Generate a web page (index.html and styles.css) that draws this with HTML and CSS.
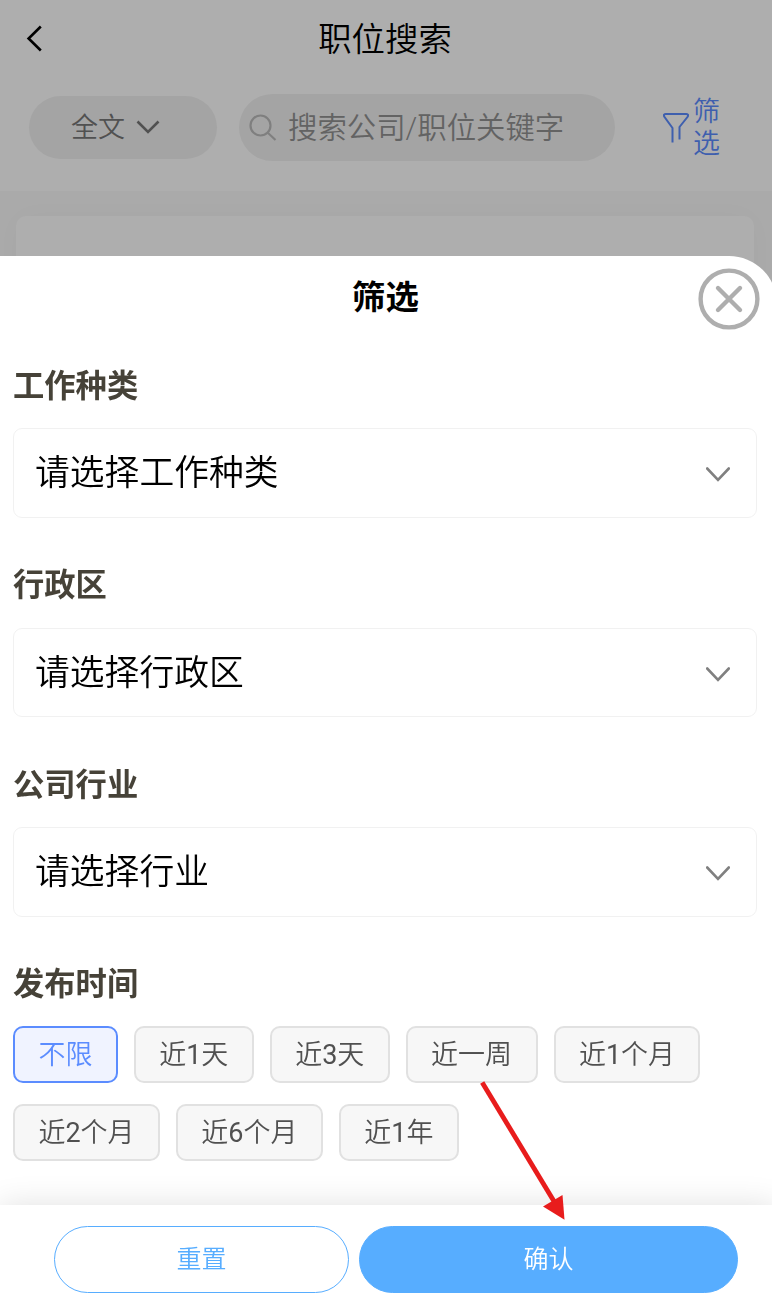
FILE: index.html
```html
<!DOCTYPE html>
<html lang="zh-CN">
<head>
  <meta charset="UTF-8" />
  <title>职位搜索</title>
  <meta name="viewport" content="width=device-width, initial-scale=1.0" />
  <link rel="stylesheet" href="styles.css">
</head>
<body>

<div class="page">
  <header class="top">
    <div class="nav">
      <svg class="back" viewBox="0 0 18 28"><path d="M15.8 1.5 L3.6 13.5 L15.8 25.5" /></svg>
      <h1>职位搜索</h1>
    </div>
    <div class="search-row">
      <div class="scope">
        <span>全文</span>
        <svg class="scope-arrow" viewBox="0 0 24 14"><path d="M1.5 1.5 L12 12 L22.5 1.5" /></svg>
      </div>
      <div class="search">
        <svg class="search-icon" viewBox="0 0 28 28"><circle cx="11.5" cy="11.5" r="10" /><path d="M18.5 18.5 L26.5 26" /></svg>
        <span>搜索公司/职位关键字</span>
      </div>
      <div class="filter">
        <svg class="filter-icon" viewBox="0 0 26 30"><path d="M9.5 29.5 V15 L1.2 3.5 Q0.2 1 3 1 H23 Q25.8 1 24.8 3.5 L16.5 14 V26.5" /></svg>
        <span>筛选</span>
      </div>
    </div>
  </header>
  <div class="result-card"></div>
</div>

<div class="mask"></div>

<div class="sheet">
  <div class="sheet-title">
    <h2>筛选</h2>
    <svg class="close" viewBox="0 0 62 62"><circle cx="31" cy="31" r="28.4" /><path d="M20 20 L42 42 M42 20 L20 42" /></svg>
  </div>

  <div class="sheet-body">
    <section>
      <h3>工作种类</h3>
      <div class="select">
        <span>请选择工作种类</span>
        <svg class="arrow" viewBox="0 0 24 15"><path d="M1.2 1.5 L12 12.8 L22.8 1.5" /></svg>
      </div>
    </section>
    <section>
      <h3>行政区</h3>
      <div class="select">
        <span>请选择行政区</span>
        <svg class="arrow" viewBox="0 0 24 15"><path d="M1.2 1.5 L12 12.8 L22.8 1.5" /></svg>
      </div>
    </section>
    <section>
      <h3>公司行业</h3>
      <div class="select">
        <span>请选择行业</span>
        <svg class="arrow" viewBox="0 0 24 15"><path d="M1.2 1.5 L12 12.8 L22.8 1.5" /></svg>
      </div>
    </section>
    <section>
      <h3>发布时间</h3>
      <div class="chips">
        <span class="chip active">不限</span>
        <span class="chip">近<b>1</b>天</span>
        <span class="chip">近<b>3</b>天</span>
        <span class="chip">近一周</span>
        <span class="chip">近<b>1</b>个月</span>
        <span class="chip">近<b>2</b>个月</span>
        <span class="chip">近<b>6</b>个月</span>
        <span class="chip">近<b>1</b>年</span>
      </div>
    </section>
  </div>

  <div class="footer">
    <button class="reset">重置</button>
    <button class="confirm">确认</button>
  </div>
</div>

<!-- pointer to the confirm button -->
<svg class="pointer" viewBox="0 0 90 142">
  <path class="line" d="M4.2 2.4 L77 123" />
  <path class="head" d="M65 126.5 L84.5 115 L86.5 139.7 Z" />
</svg>

</body>
</html>
```
FILE: styles.css
```css
* { box-sizing: border-box; }

html, body {
  margin: 0; padding: 0; height: 100%;
  font-family: Roboto, "Noto Sans CJK SC", sans-serif;
  font-weight: 350;
  background: #f9f9f9;
  overflow: hidden;
}

h1, h2, h3 { margin: 0; }

svg {
  display: block;
  flex: none;
  fill: none;
}

/* search page */
.top {
  height: 191px;
  background: #fff;
}

.nav {
  display: flex;
  align-items: center;
  height: 77px;
  padding-left: 25px;
}

.back {
  width: 18px; height: 28px;
  stroke: #000;
  stroke-width: 2.6;
}

.nav h1 {
  flex: 1;
  padding: 0 45px 4px 0;
  text-align: center;
  font-size: 33.4px;
  font-weight: 350;
}

.search-row {
  display: flex;
  align-items: center;
  height: 101px;
  padding-left: 29px;
}

.scope {
  display: flex;
  align-items: center;
  width: 188px; height: 63px;
  padding-left: 42px;
  border-radius: 32px;
  background: #f1f1f1;
  color: #777;
  font-size: 27px;
}

.scope span, .search span { padding-bottom: 5px; }

.scope-arrow {
  width: 24px; height: 14px;
  margin: -2px 0 0 11px;
  stroke: #777;
  stroke-width: 2.6;
}

.search {
  display: flex;
  align-items: center;
  width: 376px; height: 67px;
  margin-left: 22px;
  padding-left: 10px;
  border-radius: 34px;
  background: #f1f1f1;
  color: #919191;
  font-size: 29.4px;
}

.search-icon {
  width: 28px; height: 28px;
  margin-right: 11px;
  stroke: #bbb;
  stroke-width: 2.2;
}

.filter {
  display: flex;
  align-items: center;
  margin-left: 48px;
  color: #5b8cff;
  font-size: 27px;
  line-height: 32px;
}

.filter span { width: 27px; margin: 0 0 0 4px; }

.filter-icon {
  width: 26px; height: 30px;
  stroke: #5b8cff;
  stroke-width: 2;
}

.result-card {
  height: 300px;
  margin: 25px 18px 0 16px;
  border-radius: 10px;
  background: #fff;
  box-shadow: 0 0 30px rgba(0,0,0,0.02);
}

.mask {
  position: fixed; top: 0; left: 0;
  width: 100%; height: 100%;
  background: rgba(0,0,0,0.318);
}

/* filter sheet, a little wider than the screen */
.sheet {
  position: fixed; left: 0; bottom: 0;
  display: flex;
  flex-direction: column;
  width: calc(100% + 5px); height: 1059.5px;
  padding-right: 5px;
  border-radius: 0 48px 0 0;
  background: #fff;
}

.sheet-title {
  display: flex;
  align-items: center;
  height: 83px;
  padding: 4px 12px 0 73px;
}

.sheet-title h2 {
  flex: 1;
  margin-top: -9px;
  text-align: center;
  font-size: 33.4px;
  font-weight: 700;
}

.close {
  width: 62px; height: 62px;
  stroke: #aeaeae;
  stroke-width: 4.4;
  stroke-linecap: round;
}

.sheet-body {
  flex: 1;
  padding: 26px 15px 0 13px;
}

section { margin-bottom: 44px; }

h3 {
  margin-bottom: 18.5px;
  color: #464238;
  font-size: 31.3px;
  font-weight: 700;
  line-height: 46px;
}

.select {
  display: flex;
  align-items: center;
  justify-content: space-between;
  height: 89.5px;
  margin-bottom: 45.5px;
  padding: 0 26px 0 21px;
  border: 1.5px solid #f1f1f1;
  border-radius: 9px;
  font-size: 34.8px;
}

.select span { padding-bottom: 6px; }

.arrow {
  width: 24px; height: 15px;
  margin-top: 3px;
  stroke: #808080;
  stroke-width: 2.6;
  stroke-linecap: round;
}

.chips {
  display: flex;
  flex-wrap: wrap;
  gap: 21px 16px;
  margin-top: -1px;
}

.chip {
  height: 57px;
  padding: 0 23.4px;
  border: 2px solid #e1e1e1;
  border-radius: 10px;
  background: #f7f7f7;
  color: #505050;
  font-size: 27px;
  line-height: 54px;
}

.chip b { font-weight: 400; }

.chip.active {
  border-color: #5b8cff;
  background: #f0f3ff;
  color: #5b8cff;
}

.footer {
  display: flex;
  gap: 10px;
  width: calc(100% + 5px);
  height: 110.5px;
  padding: 21.5px 39px 22px 54px;
  background: #fff;
  box-shadow: 0 0 30px rgba(0,0,0,0.12);
}

.footer button {
  padding: 0 0 6px;
  border: 1px solid #57adff;
  border-radius: 34px;
  font-family: inherit;
  font-size: 25px;
  font-weight: 350;
}

.reset {
  width: 295px;
  background: #fff;
  color: #57adff;
}

.confirm {
  flex: 1;
  background: #57adff;
  color: #fff;
}

.pointer {
  position: absolute; top: 1080px; left: 478px;
  width: 90px; height: 142px;
}

.pointer .line { stroke: #e81c1c; stroke-width: 4.8; }
.pointer .head { fill: #e81c1c; }
```
